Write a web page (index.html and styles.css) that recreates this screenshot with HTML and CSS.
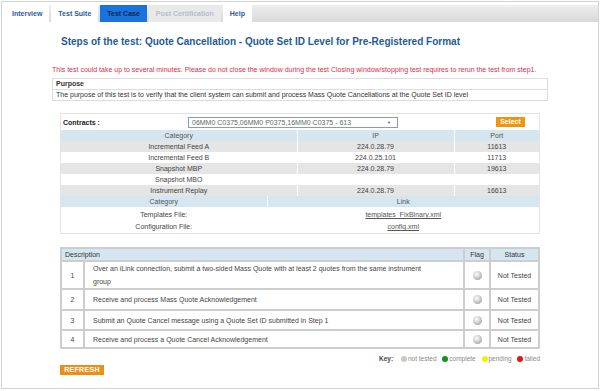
FILE: index.html
```html
<!DOCTYPE html>
<html>
<head>
<meta charset="utf-8">
<link rel="stylesheet" href="styles.css">
</head>
<body>
<div class="frame">
  <div class="tabs">
    <div class="tab">Interview</div>
    <div class="tab">Test Suite</div>
    <div class="tab active">Test Case</div>
    <div class="tab disabled">Post Certification</div>
    <div class="tab">Help</div>
  </div>
  <div class="main">
    <h1 class="title">Steps of the test: Quote Cancellation - Quote Set ID Level for Pre-Registered Format</h1>
    <p class="warn">This test could take up to several minutes. Please do not close the window during the test Closing window/stopping test requires to rerun the test from step1.</p>
    <table class="purpose">
      <tr><th>Purpose</th></tr>
      <tr><td>The purpose of this test is to verify that the client system can submit and process Mass Quote Cancellations at the Quote Set ID level</td></tr>
    </table>
    <div class="inner">
      <div class="contracts">
        <div class="clabel">Contracts :</div>
        <div class="select"><span>06MM0 C0375,06MM0 P0375,16MM0 C0375 - 613</span><span class="arrow">▼</span></div>
        <div class="btn">Select</div>
      </div>
      <table class="grid ip">
        <colgroup><col class="c1"><col class="c2"><col class="c3"></colgroup>
        <tr class="head"><td>Category</td><td>IP</td><td>Port</td></tr>
        <tr class="alt"><td>Incremental Feed A</td><td>224.0.28.79</td><td>11613</td></tr>
        <tr><td>Incremental Feed B</td><td>224.0.25.101</td><td>11713</td></tr>
        <tr class="alt"><td>Snapshot MBP</td><td>224.0.28.79</td><td>19613</td></tr>
        <tr><td>Snapshot MBO</td><td></td><td></td></tr>
        <tr class="alt"><td>Instrument Replay</td><td>224.0.28.79</td><td>16613</td></tr>
      </table>
      <table class="grid links">
        <colgroup><col class="l1"><col class="l2"></colgroup>
        <tr class="head"><td>Category</td><td>Link</td></tr>
        <tr class="lrow first"><td>Templates File:</td><td><a href="#">templates_FixBinary.xml</a></td></tr>
        <tr class="lrow"><td>Configuration File:</td><td><a href="#">config.xml</a></td></tr>
      </table>
    </div>
    <table class="desc">
      <colgroup><col class="d1"><col class="d2"><col class="d3"><col class="d4"></colgroup>
      <tr class="dhead"><td colspan="2" class="left">Description</td><td>Flag</td><td>Status</td></tr>
      <tr class="r1"><td class="num">1</td><td class="text">Over an iLink connection, submit a two-sided Mass Quote with at least 2 quotes from the same instrument group</td><td><span class="ball"></span></td><td class="status">Not Tested</td></tr>
      <tr class="r2"><td class="num">2</td><td class="text">Receive and process Mass Quote Acknowledgement</td><td><span class="ball"></span></td><td class="status">Not Tested</td></tr>
      <tr class="r3"><td class="num">3</td><td class="text">Submit an Quote Cancel message using a Quote Set ID submitted in Step 1</td><td><span class="ball"></span></td><td class="status">Not Tested</td></tr>
      <tr class="r4"><td class="num">4</td><td class="text">Receive and process a Quote Cancel Acknowledgement</td><td><span class="ball"></span></td><td class="status">Not Tested</td></tr>
    </table>
    <div class="key">
      <b>Key:</b>
      <span class="dot gray"></span>not tested
      <span class="dot green"></span>complete
      <span class="dot yellow"></span>pending
      <span class="dot red"></span>failed
    </div>
    <div class="refresh">REFRESH</div>
  </div>
</div>
</body>
</html>
```
FILE: styles.css
```css
* { box-sizing: border-box; }
body {
  margin: 0;
  font-family: "Liberation Sans", Arial, sans-serif;
  font-size: 7px;
  color: #444;
  background: #fff;
}
.frame {
  margin: 1px 1px 0;
  height: 388px;
  border: 1px solid #d2d2d2;
}
.tabs {
  display: flex;
  gap: 2px;
  height: 17px;
  margin: 3px 0 0 3px;
  background: linear-gradient(#eeeeee, #d9d9d9);
}
.tab {
  padding: 0 7px;
  line-height: 17px;
  font-weight: bold;
  color: #2b5c9b;
  background: #fff;
}
.tab.active { background: #1a72dc; color: #0d2950; }
.tab.disabled { background: #e9e9e9; color: #b5bccb; }
.main {
  width: 496px;
  margin: 0 auto;
}
.title {
  margin: 14px 0 0 9px;
  font-size: 10px;
  line-height: 12px;
  font-weight: bold;
  color: #1f5a96;
}
.warn {
  margin: 17px 0 4px;
  line-height: 9px;
  color: #d6304c;
}
.purpose {
  width: 100%;
  border-collapse: collapse;
  border: 1px solid #dcdcdc;
}
.purpose th, .purpose td {
  text-align: left;
  padding: 0 3px;
  height: 11px;
  line-height: 10px;
  color: #333;
}
.purpose th { border-bottom: 1px solid #dcdcdc; }
.inner {
  margin: 12px 8px 0;
  border: 1px solid #e3e3e3;
}
.contracts {
  display: flex;
  align-items: center;
  height: 16px;
  padding-left: 2px;
}
.clabel {
  width: 125px;
  font-weight: bold;
  color: #222;
}
.select {
  width: 210px;
  height: 11px;
  border: 1px solid #7f9dc9;
  display: flex;
  justify-content: space-between;
  align-items: center;
  padding: 0 6px 0 3px;
  color: #666;
}
.arrow { font-size: 4px; color: #555; }
.btn {
  margin-left: auto;
  margin-right: 14px;
  width: 29px;
  height: 10px;
  background: #ef960f;
  color: #fff;
  font-weight: bold;
  text-align: center;
  line-height: 10px;
}
.grid {
  width: 100%;
  border-collapse: collapse;
  table-layout: fixed;
}
.grid td {
  height: 11px;
  padding: 0;
  text-align: center;
  line-height: 11px;
  color: #444;
}
.grid td + td { border-left: 1px solid #fff; }
.grid .head td { background: #d6e6f1; color: #555; }
.grid .alt td { background: #e5e5e5; }
.grid .lrow td { height: 12px; line-height: 12px; }
.grid .lrow.first td { height: 14px; padding-top: 2px; }
.c1 { width: 236px; }
.c2 { width: 157px; }
.l1 { width: 206px; }
.links a { color: #555; }
.desc {
  margin: 13px 8px 0;
  width: 480px;
  border-collapse: separate;
  border-spacing: 0;
  border: 1px solid #cdcdcd;
  table-layout: fixed;
}
.desc td {
  border: 1px solid #cdcdcd;
  padding: 0;
  text-align: center;
  color: #444;
  font-size: 7px;
}
.d1 { width: 23px; }
.d3 { width: 26px; }
.d4 { width: 49px; }
.dhead td { background: #d6e6f1; height: 13px; color: #333; }
.dhead td.left { text-align: left; padding-left: 3px; }
.desc td.text {
  text-align: left;
  padding: 0 24px 0 8px;
  line-height: 13px;
}
.r1 td { height: 28px; }
.r2 td { height: 21px; }
.r3 td { height: 20px; }
.r4 td { height: 18px; }
.ball {
  display: inline-block;
  width: 9px;
  height: 9px;
  border-radius: 50%;
  vertical-align: middle;
  background: radial-gradient(circle at 40% 35%, #ffffff 0%, #cfcfcf 45%, #8a8a8a 100%);
}
.key {
  margin: 5px 8px 0 0;
  text-align: right;
  color: #888;
  font-size: 6.5px;
  line-height: 10px;
}
.key b { color: #444; margin-right: 2px; }
.dot {
  display: inline-block;
  width: 6px;
  height: 6px;
  border-radius: 50%;
  margin: 0 1px 0 4px;
  vertical-align: -1px;
}
.dot.gray { background: #c8c8c8; }
.dot.green { background: #17901c; }
.dot.yellow { background: #f4f000; }
.dot.red { background: #e01616; }
.refresh {
  margin: 1px 0 0 8px;
  width: 44px;
  height: 10px;
  background: #e8901a;
  color: #fff;
  font-weight: bold;
  text-align: center;
  line-height: 10px;
  letter-spacing: 0.3px;
}
```
